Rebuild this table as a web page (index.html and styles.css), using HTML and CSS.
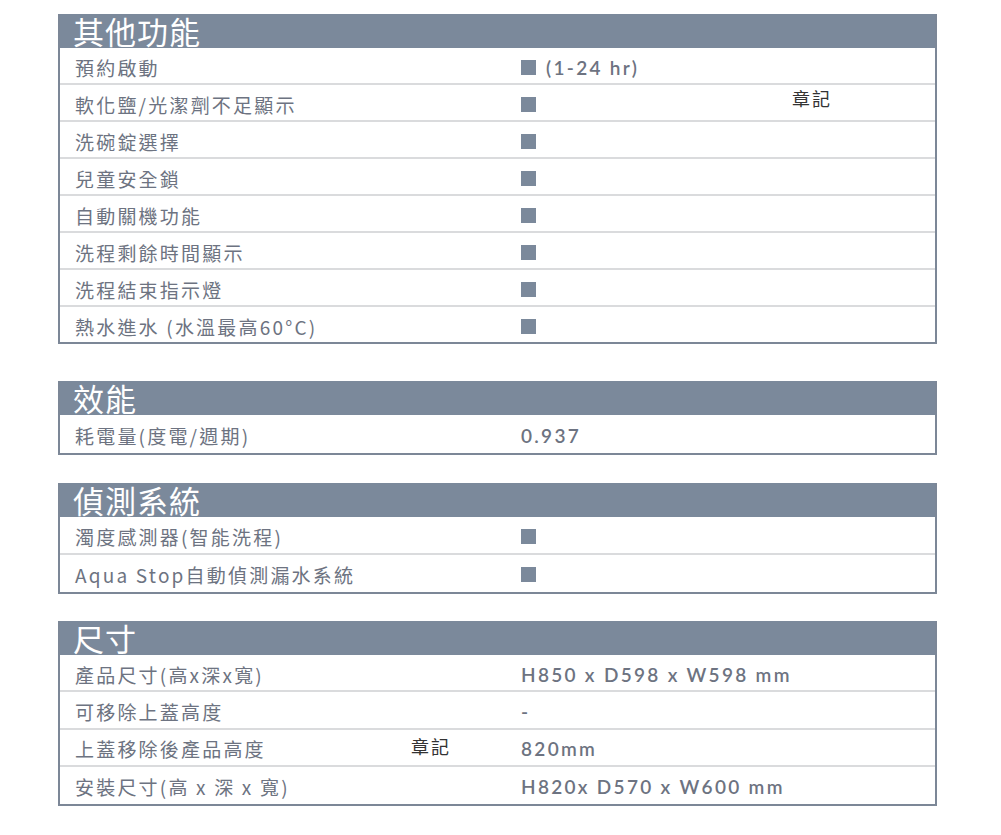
FILE: index.html
```html
<!DOCTYPE html>
<html lang="zh-Hant">
<head>
<meta charset="utf-8">
<link rel="stylesheet" href="styles.css">
</head>
<body>
<div class="page">
  <section class="spec s1">
    <h2 class="head">其他功能</h2>
    <div class="row"><span class="label">預約啟動</span><span class="val"><i class="sq"></i>(1-24 hr)</span></div>
    <div class="row"><span class="label">軟化鹽/光潔劑不足顯示</span><span class="val"><i class="sq"></i></span><span class="stamp stamp1">章記</span></div>
    <div class="row"><span class="label">洗碗錠選擇</span><span class="val"><i class="sq"></i></span></div>
    <div class="row"><span class="label">兒童安全鎖</span><span class="val"><i class="sq"></i></span></div>
    <div class="row"><span class="label">自動關機功能</span><span class="val"><i class="sq"></i></span></div>
    <div class="row"><span class="label">洗程剩餘時間顯示</span><span class="val"><i class="sq"></i></span></div>
    <div class="row"><span class="label">洗程結束指示燈</span><span class="val"><i class="sq"></i></span></div>
    <div class="row"><span class="label">熱水進水 (水溫最高60°C)</span><span class="val"><i class="sq"></i></span></div>
  </section>
  <section class="spec s2">
    <h2 class="head">效能</h2>
    <div class="row"><span class="label">耗電量(度電/週期)</span><span class="val">0.937</span></div>
  </section>
  <section class="spec s3">
    <h2 class="head">偵測系統</h2>
    <div class="row"><span class="label">濁度感測器(智能洗程)</span><span class="val"><i class="sq"></i></span></div>
    <div class="row"><span class="label">Aqua Stop自動偵測漏水系統</span><span class="val"><i class="sq"></i></span></div>
  </section>
  <section class="spec s4">
    <h2 class="head">尺寸</h2>
    <div class="row"><span class="label">產品尺寸(高x深x寬)</span><span class="val">H850 x D598 x W598 mm</span></div>
    <div class="row"><span class="label">可移除上蓋高度</span><span class="val">-</span></div>
    <div class="row"><span class="label">上蓋移除後產品高度</span><span class="val">820mm</span><span class="stamp stamp2">章記</span></div>
    <div class="row"><span class="label">安裝尺寸(高 x 深 x 寬)</span><span class="val">H820x D570 x W600 mm</span></div>
  </section>
</div>
</body>
</html>
```
FILE: styles.css
```css
html, body {
  margin: 0;
  padding: 0;
  background: #ffffff;
}
.page {
  width: 879px;
  margin-left: 58px;
  padding-top: 14px;
  font-family: "Noto Sans CJK TC", "Noto Sans", sans-serif;
}
.spec {
  border: 2px solid #7c8797;
  border-top: 0;
  box-sizing: border-box;
}
.s2 { margin-top: 37px; }
.s3 { margin-top: 28px; }
.s4 { margin-top: 27px; }
.head {
  margin: 0;
  height: 34px;
  background: #7b899b;
  color: #ffffff;
  font-size: 31px;
  font-weight: 400;
  line-height: 34px;
  padding-left: 13px;
  letter-spacing: 1px;
}
.row {
  position: relative;
  display: flex;
  align-items: center;
  height: 37px;
  padding-top: 3px;
  box-sizing: border-box;
  border-bottom: 2px solid #dadbdd;
  color: #6d7381;
  font-size: 19px;
  letter-spacing: 2.2px;
}
.s2 .row { height: 38px; }
.s3 .row { height: 37.5px; }
.s4 .row { height: 37.25px; }
.row:last-child {
  border-bottom: 0;
}
.s1 .row:last-child { height: 35px; }
.label {
  width: 461px;
  padding-left: 15px;
  box-sizing: border-box;
  white-space: nowrap;
}
.val {
  display: flex;
  align-items: center;
  font-family: "Lato", "Noto Sans", sans-serif;
  font-weight: 600;
  letter-spacing: 2.3px;
}
.sq {
  display: inline-block;
  width: 15px;
  height: 15px;
  background: #7b899b;
  margin-right: 10px;
}
.stamp {
  position: absolute;
  color: #333333;
  font-size: 18px;
  letter-spacing: 2px;
  font-weight: 400;
}
.stamp1 { left: 732px; top: 0px; }
.stamp2 { left: 351px; top: 3px; }
```
